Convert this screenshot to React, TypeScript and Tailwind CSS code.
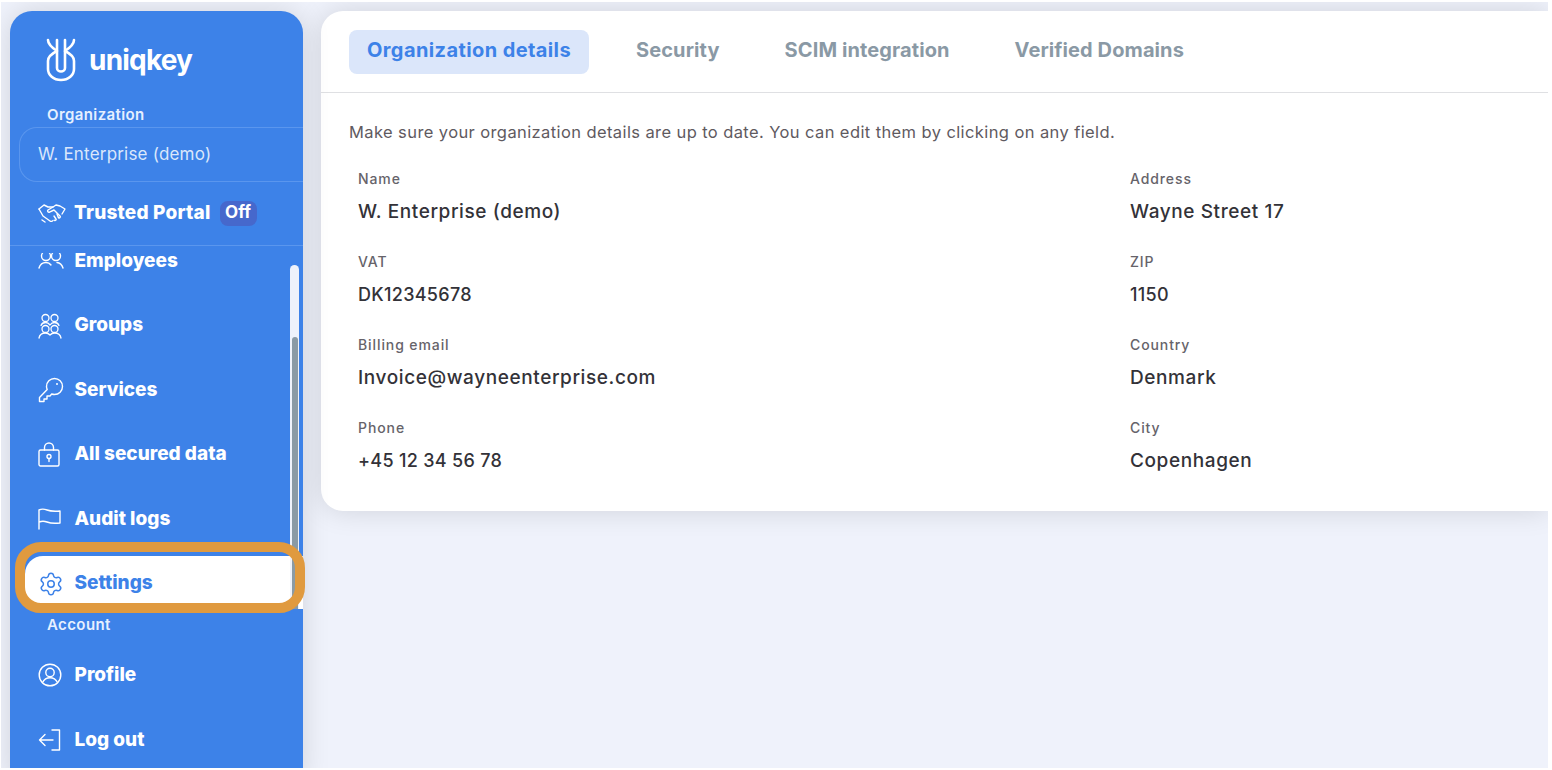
import { Settings } from 'lucide-react';

function Logo() {
  return (
    <svg width="30" height="44" viewBox="0 0 30 44" fill="none" stroke="#fff" strokeWidth="2.6" strokeLinecap="round" strokeLinejoin="round">
      <path d="M2 2c0 4 3 7 9 11-6 3-9 6-9 10v8c0 6 5.500 11 13 11s13-5 13-11v-8c0-4-3-7-9-10 6-4 9-7 9-11" />
      <path d="M11 2v28c0 2 2 3.500 4 3.500s4-1.500 4-3.500V2" />
    </svg>
  );
}

function HandshakeIcon() {
  return (
    <svg width="28" height="24" viewBox="0 0 28 24" fill="none" stroke="#fff" strokeWidth="1.4" strokeLinecap="round" strokeLinejoin="round">
      <path d="M1 8l5-4 4 2h5l3-2 4 1 5 3-3 5" />
      <path d="M1 8l4 7 7 5c1 .7 2.500 .5 3-.5" />
      <path d="M15 6l-5 3c-1 1 0 2.500 1.500 2.200L16 9l6 6c1 1-.5 2.500-1.500 1.700" />
      <path d="M19 13l1.500 3.700M16 15l2 3c.7 1-.7 2-1.600 1.200" />
      <path d="M4 19l3 2" />
    </svg>
  );
}

function EmployeesIcon() {
  return (
    <svg width="26" height="24" viewBox="0 0 26 24" fill="none" stroke="#fff" strokeWidth="1.4" strokeLinecap="round" strokeLinejoin="round">
      <circle cx="8" cy="7" r="4.500" />
      <circle cx="18" cy="7" r="4.500" />
      <path d="M1 19c1-3.500 3.500-5.500 7-5.500 2.500 0 4 1 5 2.500" />
      <path d="M19 13.500c3 .2 5 2.300 6 5.500" />
    </svg>
  );
}

function GroupsIcon() {
  return (
    <svg width="24" height="26" viewBox="0 0 24 26" fill="none" stroke="#fff" strokeWidth="1.300" strokeLinecap="round" strokeLinejoin="round">
      <circle cx="7.500" cy="5" r="3.500" />
      <circle cx="16.500" cy="5" r="3.500" />
      <path d="M3 12.500c.6-1.800 2.400-3 4.500-3 1.800 0 3.400 1 4.500 2.500 1-1.500 2.700-2.500 4.500-2.500 2.100 0 3.900 1.200 4.500 3" />
      <circle cx="7.500" cy="16" r="3.500" />
      <circle cx="16.500" cy="16" r="3.500" />
      <path d="M1 25c.6-3 3.300-5 6.500-5 1.800 0 3.400.8 4.500 2 1.100-1.200 2.700-2 4.500-2 3.200 0 5.900 2 6.500 5" />
    </svg>
  );
}

function KeyIcon() {
  return (
    <svg width="26" height="26" viewBox="0 0 26 26" fill="none" stroke="#fff" strokeWidth="1.400" strokeLinecap="round" strokeLinejoin="round">
      <path d="M16.500 1.500a8 8 0 0 1 0 16c-1 0-2-.2-2.800-.5L12 19h-3v3H6v2.500H1.500v-4L9.200 12.500c-.4-1-.7-2-.7-3a8 8 0 0 1 8-8z" />
      <circle cx="19" cy="7" r="1" fill="#fff" stroke="none" />
    </svg>
  );
}

function LockIcon() {
  return (
    <svg width="22" height="25" viewBox="0 0 22 25" fill="none" stroke="#fff" strokeWidth="1.400" strokeLinecap="round" strokeLinejoin="round">
      <rect x="1" y="8" width="20" height="16" rx="1.500" />
      <path d="M6.500 8V5.500a4.500 4.500 0 0 1 9 0V8" />
      <circle cx="11" cy="14.500" r="2" />
      <path d="M11 16.500v3" />
    </svg>
  );
}

function FlagIcon() {
  return (
    <svg width="23" height="22" viewBox="0 0 23 22" fill="none" stroke="#fff" strokeWidth="1.400" strokeLinecap="round" strokeLinejoin="round">
      <path d="M1 21V2c3-1.500 5.500-1 8 0s6.500 1.500 13 1v12c-6 .7-10 .2-13-1s-5-1.200-8 0" />
    </svg>
  );
}

function ProfileIcon() {
  return (
    <svg width="24" height="24" viewBox="0 0 24 24" fill="none" stroke="#fff" strokeWidth="1.400" strokeLinecap="round" strokeLinejoin="round">
      <circle cx="12" cy="12" r="10.800" />
      <circle cx="12" cy="9.500" r="4.200" />
      <path d="M4.500 19.500c1.500-3 4.200-4.800 7.500-4.800s6 1.800 7.500 4.800" />
    </svg>
  );
}

function LogoutIcon() {
  return (
    <svg width="23" height="22" viewBox="0 0 23 22" fill="none" stroke="#fff" strokeWidth="1.400" strokeLinecap="round" strokeLinejoin="round">
      <path d="M14 1h7.500v20H14" />
      <path d="M15 11H1.500M7 5.500L1.500 11 7 16.500" />
    </svg>
  );
}

const navItems = [
  { label: 'Employees', icon: <EmployeesIcon /> },
  { label: 'Groups', icon: <GroupsIcon /> },
  { label: 'Services', icon: <KeyIcon /> },
  { label: 'All secured data', icon: <LockIcon /> },
  { label: 'Audit logs', icon: <FlagIcon /> },
];

const details = [
  { left: ['Name', 'W. Enterprise (demo)'], right: ['Address', 'Wayne Street 17'] },
  { left: ['VAT', 'DK12345678', 'num'], right: ['ZIP', '1150', 'num'] },
  { left: ['Billing email', 'Invoice@wayneenterprise.com'], right: ['Country', 'Denmark'] },
  { left: ['Phone', '+45 12 34 56 78', 'num'], right: ['City', 'Copenhagen'] },
];

function NavRow({ icon, label }: { icon: React.ReactNode; label: string }) {
  return (
    <div className="h-14 flex items-center pl-[28px] shrink-0">
      <div className="w-[36.5px] flex items-center">{icon}</div>
      <span className="text-[19px] font-extrabold text-white">{label}</span>
    </div>
  );
}

function Field({ data }: { data: string[] }) {
  const [label, value, kind] = data;
  return (
    <div className="h-[83px]">
      <div className="text-[14px] leading-[20px] font-medium text-[#66636a] tracking-[0.9px]">{label}</div>
      <div className={kind === 'num'
        ? 'mt-[10px] text-[18px] leading-[26px] font-medium text-[#333238] tracking-[0.3px]'
        : 'mt-[10px] text-[19px] leading-[26px] font-medium text-[#333238] tracking-[0.6px]'}>{value}</div>
    </div>
  );
}

export default function App() {
  return (
    <div className="h-[770px] w-[1552px] overflow-hidden bg-white font-['Inter',sans-serif]">
      <div className="ml-px mr-[4px] mt-[2px] h-[766px] bg-[#eff2fb] flex gap-[18px] pl-[9px] pt-[9px] overflow-hidden">
        {/* Sidebar */}
        <aside className="relative w-[293px] h-[770px] shrink-0 bg-[#3d82e8] rounded-t-[22px] shadow-[0_0_28px_rgba(0,0,0,0.13)] flex flex-col">
          <div className="h-[235px] shrink-0 border-b border-[#5a96ee]">
            <div className="flex items-center pl-[36px] pt-[27px] gap-[13px]">
              <Logo />
              <span className="text-[28px] leading-[40px] font-bold text-white tracking-[-0.8px]">uniqkey</span>
            </div>
            <div className="pl-[37px] mt-[23px] text-[15px] leading-[20px] font-semibold text-[#e6f0ff] tracking-[0.4px]">Organization</div>
            <div className="ml-[9px] mt-[2px] h-[55px] flex items-center pl-[18px] border border-r-0 border-[#5a96ee] rounded-l-[18px] text-[17px] tracking-[0.2px] text-[#dbe7fb]">
              W. Enterprise (demo)
            </div>
            <div className="flex items-center pl-[28px] mt-[17px] h-[28px]">
              <div className="w-[36px] flex items-center"><HandshakeIcon /></div>
              <span className="text-[19px] font-extrabold text-white tracking-[0.2px]">Trusted Portal</span>
              <span className="ml-[9px] h-[25px] w-[37px] rounded-lg bg-[#4668cc] text-[17px] font-bold text-white flex items-center justify-center">Off</span>
            </div>
          </div>

          {/* Scrolled list */}
          <div className="relative mt-[7px] h-[356px] shrink-0 overflow-hidden">
            <div className="-mt-[20px] flex flex-col gap-[8.5px]">
              {navItems.map((item) => (
                <NavRow key={item.label} icon={item.icon} label={item.label} />
              ))}
              <div className="h-14 ml-[15px] rounded-l-[18px] bg-white flex items-center pl-[13px] shrink-0">
                <div className="w-[36.5px] flex items-center">
                  <Settings size={26} strokeWidth={1.4} color="#3d82e8" />
                </div>
                <span className="text-[19px] font-extrabold text-[#3d82e8]">Settings</span>
              </div>
            </div>
            <div className="absolute left-[280px] top-[12px] bottom-0 w-[9px] rounded-t-full bg-[#eef2fb]">
              <div className="absolute left-[2px] right-[1px] top-[72px] bottom-0 rounded-t-full bg-[#8a9aa5]" />
            </div>
          </div>

          <div className="pl-[37px] mt-[6px] text-[15px] leading-[20px] font-semibold text-[#e6f0ff] tracking-[0.4px]">Account</div>
          <div className="mt-[12px] flex flex-col gap-[9px]">
            <NavRow icon={<ProfileIcon />} label="Profile" />
            <NavRow icon={<LogoutIcon />} label="Log out" />
          </div>

          {/* Annotation ring */}
          <div className="absolute left-[5px] top-[531px] w-[290px] h-[71px] rounded-[26px] border-[10px] border-[#e09a3f]" />
        </aside>

        {/* Main */}
        <main className="flex-1 min-w-0">
          <div className="h-[500px] bg-white rounded-tl-[22px] rounded-bl-[22px] shadow-[0_0_28px_rgba(0,0,0,0.13)]">
            <div className="h-[82px] border-b border-[#dfe0e3] flex items-center pl-[28px] gap-[29px]">
              <div className="h-11 px-[18px] pb-[3px] rounded-lg bg-[#dbe6fa] text-[#3d82e8] text-[20px] tracking-[0.4px] font-bold flex items-center">Organization details</div>
              {['Security', 'SCIM integration', 'Verified Domains'].map((tab) => (
                <div key={tab} className="px-[18px] pb-[3px] text-[#8a99a5] text-[20px] tracking-[0.1px] font-bold">{tab}</div>
              ))}
            </div>
            <p className="ml-[28px] mt-[28px] text-[16.5px] leading-[22px] tracking-[0.4px] text-[#5f5a5f]">
              Make sure your organization details are up to date. You can edit them by clicking on any field.
            </p>
            <div className="mt-[26px] ml-[37px] flex flex-col">
              {details.map((row) => (
                <div key={row.left[0]} className="flex">
                  <div className="w-[772px]"><Field data={row.left} /></div>
                  <Field data={row.right} />
                </div>
              ))}
            </div>
          </div>
        </main>
      </div>
    </div>
  );
}
